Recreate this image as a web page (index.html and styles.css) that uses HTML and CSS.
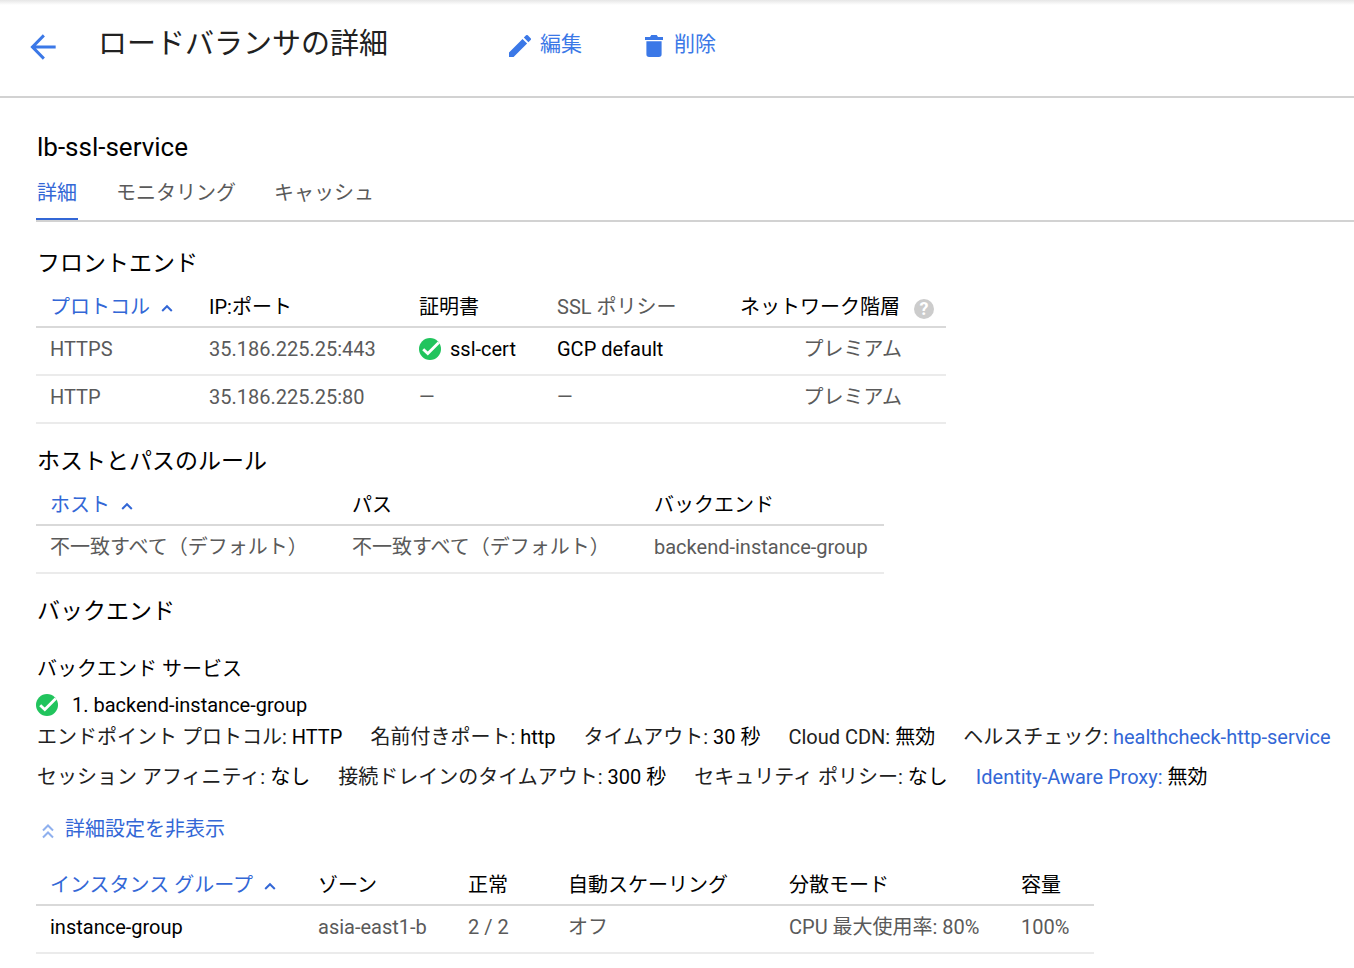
FILE: index.html
```
<!DOCTYPE html>
<html lang="ja">
<head>
<meta charset="utf-8">
<meta name="viewport" content="width=device-width, initial-scale=1">
<title>ロードバランサの詳細</title>
<link rel="stylesheet" href="styles.css">
</head>
<body>
<svg class="sprite" aria-hidden="true">
  <symbol id="check" viewBox="0 0 22 22">
    <circle cx="11" cy="11" r="11" fill="#21c45d"/>
    <path d="M4.200 11.200 8.800 15.600 19.800 4.400" fill="none" stroke="#fff" stroke-width="2.8"/>
  </symbol>
  <symbol id="caret" viewBox="0 0 12 8">
    <path d="M1.200 7 6 2.200 10.800 7" fill="none" stroke="currentColor" stroke-width="2"/>
  </symbol>
</svg>

<header class="header">
  <button class="back" type="button" aria-label="戻る">
    <svg viewBox="0 0 24 24" class="back-icon"><path fill="currentColor" d="M20 11.100H7.600l5.600-5.700L11.900 4 4 12l7.900 8 1.300-1.400-5.600-5.700H20z"/></svg>
  </button>
  <h1 class="title">ロードバランサの詳細</h1>
  <div class="actions">
    <button class="action" type="button">
      <svg class="action-icon" viewBox="3 3 18 18"><path fill="currentColor" d="M3 17.25V21h3.75L17.81 9.94l-3.75-3.75L3 17.25zM20.71 7.04a1 1 0 0 0 0-1.41l-2.34-2.34a1 1 0 0 0-1.41 0l-1.83 1.83 3.75 3.75 1.83-1.83z"/></svg>
      編集
    </button>
    <button class="action" type="button">
      <svg class="action-icon" viewBox="0 0 22 22"><path fill="currentColor" d="M2 2h5l1.300-2h5.400L15 2h5v3H2zM3.400 6.300h15.200v13a2.700 2.700 0 0 1-2.700 2.700H6.100a2.700 2.700 0 0 1-2.700-2.700z"/></svg>
      削除
    </button>
  </div>
</header>

<main class="main">
  <h2 class="name">lb-ssl-service</h2>
  <nav class="tabs">
    <a class="tab tab-active" href="#details" aria-current="page">詳細</a>
    <a class="tab" href="#monitoring">モニタリング</a>
    <a class="tab" href="#cache">キャッシュ</a>
  </nav>

  <section class="section">
    <h3 class="heading">フロントエンド</h3>
    <table class="table frontend">
      <thead>
        <tr>
          <th class="sorted" aria-sort="ascending">プロトコル<svg class="caret"><use href="#caret"/></svg></th>
          <th>IP:ポート</th>
          <th>証明書</th>
          <th class="muted">SSL ポリシー</th>
          <th class="tier-head">ネットワーク階層<button class="help" type="button" aria-label="ヘルプ">?</button></th>
        </tr>
      </thead>
      <tbody>
        <tr>
          <td>HTTPS</td>
          <td>35.186.225.25:443</td>
          <td class="strong"><span class="status"><svg class="check"><use href="#check"/></svg>ssl-cert</span></td>
          <td class="strong">GCP default</td>
          <td class="tier">プレミアム</td>
        </tr>
        <tr>
          <td>HTTP</td>
          <td>35.186.225.25:80</td>
          <td>—</td>
          <td>—</td>
          <td class="tier">プレミアム</td>
        </tr>
      </tbody>
    </table>
  </section>

  <section class="section">
    <h3 class="heading">ホストとパスのルール</h3>
    <table class="table rules">
      <thead>
        <tr>
          <th class="sorted" aria-sort="ascending">ホスト<svg class="caret"><use href="#caret"/></svg></th>
          <th>パス</th>
          <th>バックエンド</th>
        </tr>
      </thead>
      <tbody>
        <tr>
          <td>不一致すべて（デフォルト）</td>
          <td>不一致すべて（デフォルト）</td>
          <td>backend-instance-group</td>
        </tr>
      </tbody>
    </table>
  </section>

  <section class="section">
    <h3 class="heading">バックエンド</h3>
    <h4 class="subheading">バックエンド サービス</h4>
    <p class="service"><svg class="check"><use href="#check"/></svg>1. backend-instance-group</p>
    <ul class="facts">
      <li>エンドポイント プロトコル: <b>HTTP</b></li>
      <li>名前付きポート: <b>http</b></li>
      <li>タイムアウト: <b>30 秒</b></li>
      <li>Cloud CDN: <b>無効</b></li>
      <li>ヘルスチェック: <a href="#healthcheck">healthcheck-http-service</a></li>
      <li>セッション アフィニティ: <b>なし</b></li>
      <li>接続ドレインのタイムアウト: <b>300 秒</b></li>
      <li>セキュリティ ポリシー: <b>なし</b></li>
      <li><a href="#iap">Identity-Aware Proxy:</a> <b>無効</b></li>
    </ul>
    <button class="toggle" type="button" aria-expanded="true">
      <svg class="toggle-icon" viewBox="0 0 12 16"><path d="M1 7.500 6 2.500 11 7.500M1 14.500 6 9.500 11 14.500" fill="none" stroke="currentColor" stroke-width="2"/></svg>
      詳細設定を非表示
    </button>
    <table class="table groups">
      <thead>
        <tr>
          <th class="sorted" aria-sort="ascending">インスタンス グループ<svg class="caret"><use href="#caret"/></svg></th>
          <th>ゾーン</th>
          <th>正常</th>
          <th>自動スケーリング</th>
          <th>分散モード</th>
          <th>容量</th>
        </tr>
      </thead>
      <tbody>
        <tr>
          <td class="strong">instance-group</td>
          <td>asia-east1-b</td>
          <td>2 / 2</td>
          <td>オフ</td>
          <td>CPU 最大使用率: 80%</td>
          <td>100%</td>
        </tr>
      </tbody>
    </table>
  </section>
</main>
</body>
</html>
```
FILE: styles.css
```
* {
  box-sizing: border-box;
}

body {
  margin: 0;
  background: #fff;
  color: #000;
  font: 20px/24px Roboto, "Noto Sans CJK JP", sans-serif;
}

button {
  margin: 0;
  padding: 0;
  border: 0;
  background: none;
  font: inherit;
  cursor: pointer;
}

a {
  color: #3367d6;
  text-decoration: none;
}

h1, h2, h3, h4, p, ul {
  margin: 0;
  padding: 0;
  font-weight: 400;
}

.sprite {
  display: none;
}

.header {
  display: flex;
  align-items: center;
  padding: 20px 24px 28px;
  border-bottom: 2px solid #d2d2d2;
  background: linear-gradient(#e6e6e6, #fff 5px);
}

.back {
  display: flex;
  margin-top: 6px;
  color: #3b78e7;
}

.back-icon {
  width: 38px;
  height: 38px;
}

.title {
  margin-left: 36px;
  color: #212121;
  font-size: 29px;
  line-height: 48px;
}

.actions {
  display: flex;
  gap: 61px;
  margin-left: 121px;
}

.action {
  display: flex;
  align-items: center;
  gap: 9px;
  color: #3b78e7;
  font-size: 21px;
}

.action-icon {
  width: 22px;
  height: 22px;
  margin-top: 4px;
}

.main {
  padding: 33px 0 14px 36px;
}

.name {
  font-size: 26px;
  line-height: 32px;
}

.name,
.heading,
.subheading,
.facts {
  padding-left: 1px;
}

.tabs {
  display: flex;
  gap: 38px;
  margin-top: 18px;
  border-bottom: 2px solid #d2d2d2;
}

.tab {
  padding-bottom: 13px;
  border-bottom: 2px solid transparent;
  color: #5a5a5a;
}

.tab-active {
  border-color: #3367d6;
  color: #3367d6;
  padding-left: 1px;
  padding-right: 1px;
}

.section {
  margin-top: 22px;
}

.tabs + .section {
  margin-top: 26px;
}

.heading {
  margin-bottom: 15px;
  font-size: 23px;
  line-height: 32px;
}

.table {
  max-width: 100%;
  border-spacing: 0;
}

.table th,
.table td {
  padding: 0 0 7px 14px;
  border-bottom: 2px solid #d9d9d9;
  font-weight: 400;
  text-align: left;
  white-space: nowrap;
}

.table td {
  padding: 9px 0 13px 14px;
  border-color: #ebebeb;
  color: #5a5a5a;
}

.table .sorted {
  color: #3367d6;
}

.table .muted {
  color: #5a5a5a;
}

.table .strong {
  color: #000;
}

.table .tier {
  padding-right: 44px;
  text-align: right;
}

.frontend { width: 910px; }
.frontend th:nth-child(1) { width: 159px; }
.frontend th:nth-child(2) { width: 210px; }
.frontend th:nth-child(3) { width: 138px; }
.frontend th:nth-child(4) { width: 183px; }

.rules { width: 848px; }
.rules th:nth-child(-n+2) { width: 302px; }

.groups { width: 1058px; }
.groups th:nth-child(1) { width: 268px; }
.groups th:nth-child(2) { width: 150px; }
.groups th:nth-child(3) { width: 100px; }
.groups th:nth-child(4) { width: 221px; }
.groups th:nth-child(5) { width: 232px; }

.caret {
  width: 12px;
  height: 8px;
  margin-left: 11px;
  vertical-align: 2px;
}

.help {
  width: 20px;
  height: 20px;
  margin-left: 14px;
  border-radius: 50%;
  background: #ccc;
  color: #fff;
  font-size: 18px;
  font-weight: 700;
  line-height: 20px;
  vertical-align: middle;
}

.check {
  flex: none;
  width: 22px;
  height: 22px;
}

.status,
.service {
  display: flex;
  align-items: center;
  gap: 9px;
}

.service {
  gap: 14px;
  margin: 12px 0 8px;
}

.subheading {
  margin-top: 29px;
  font-size: 20px;
}

.facts {
  display: flex;
  flex-wrap: wrap;
  gap: 16px 28px;
  color: #212121;
  list-style: none;
}

.facts b {
  color: #000;
  font-weight: 400;
}

.toggle {
  display: flex;
  align-items: center;
  gap: 11px;
  margin: 28px 0 32px;
  padding-left: 6px;
  color: #3367d6;
}

.toggle-icon {
  width: 12px;
  height: 16px;
  margin-top: 4px;
  color: #8fb0ee;
}
```
